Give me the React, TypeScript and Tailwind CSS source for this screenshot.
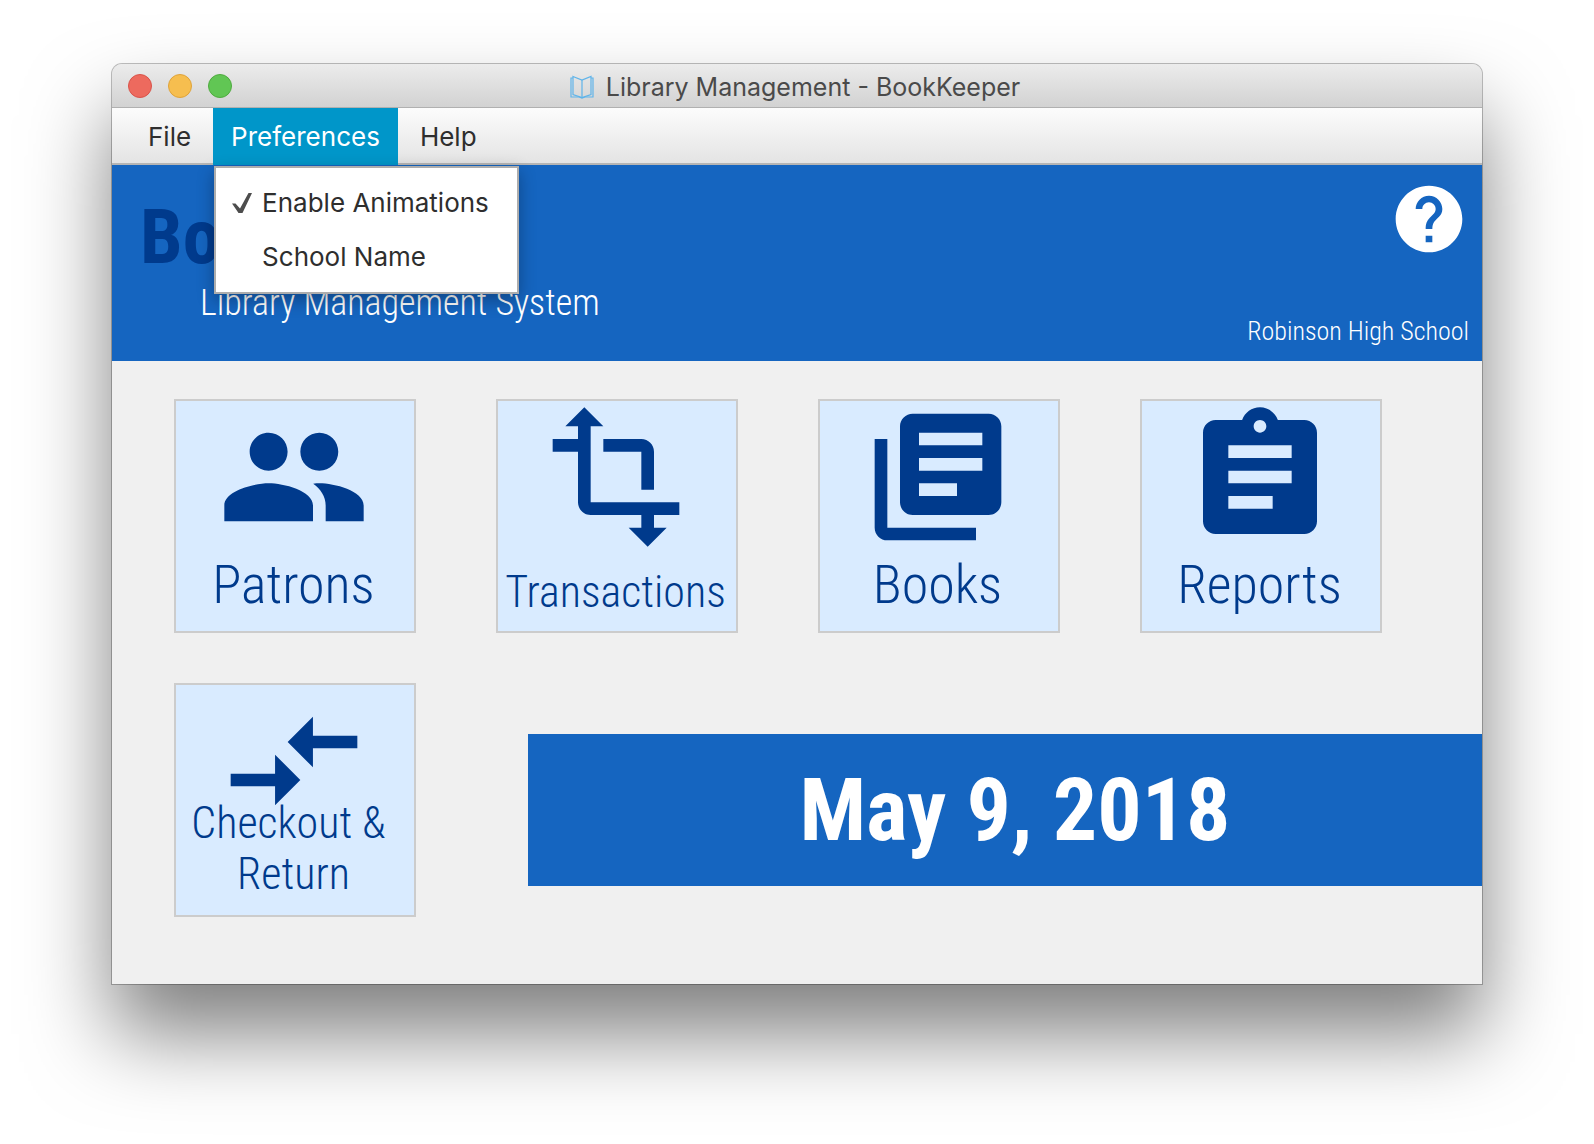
import { MdAssignment, MdCompareArrows, MdHelp, MdLibraryBooks, MdPeople, MdTransform } from "react-icons/md";
import type { ReactNode } from "react";

const roboto = "font-['Roboto_Condensed','Roboto',sans-serif]";

function BookIcon() {
  return (
    <svg viewBox="0 0 24 24" className="size-6" fill="none" stroke="#5fb4ea" strokeWidth="1.2" aria-hidden="true">
      <path d="M3 1.500 12 5l9-3.500v18L12 22.500 3 19.500z" />
      <path d="M12 5v17.500M3 3H1v19h8l3 1 3-1h8V3h-2" />
    </svg>
  );
}

function Tile({ icon, children, size }: { icon: ReactNode; children: ReactNode; size: string }) {
  return (
    <button
      type="button"
      className="flex h-[234px] flex-col items-center border-2 border-[#cccccc] bg-[#d9ebff] pr-[3px] font-light text-[#003a8c]"
    >
      {icon}
      <span className={size}>{children}</span>
    </button>
  );
}

export default function App() {
  return (
    <div className="min-h-screen bg-white px-28 pt-16 pb-40 font-['Inter',sans-serif]">
      <main className="rounded-t-[10px] bg-[#f0f0f0] shadow-[0_0_0_1px_rgba(0,0,0,0.25),0_50px_84px_rgba(0,0,0,0.5)]">
        <div className="flex h-11 items-center rounded-t-[10px] border-b border-[#b0b0b0] bg-linear-to-b from-[#ececec] to-[#d2d2d2] px-4">
          <div className="flex flex-1 gap-4">
            <button type="button" aria-label="Close" className="size-6 rounded-full border border-[#d9534a] bg-[#ed6a5e]" />
            <button type="button" aria-label="Minimize" className="size-6 rounded-full border border-[#dfa33a] bg-[#f6be4f]" />
            <button type="button" aria-label="Zoom" className="size-6 rounded-full border border-[#4fab3f] bg-[#61c654]" />
          </div>
          <h1 className="flex items-center gap-3 pt-0.5 pr-1 text-[25px] leading-8 text-[#4a4a4a]">
            <BookIcon />
            Library Management - BookKeeper
          </h1>
          <div className="flex-1" />
        </div>

        <nav className="flex h-[57px] border-b-2 border-[#b5b5b5] bg-linear-to-b from-[#fcfcfc] to-[#e4e4e4] pl-[18px] text-[26px] leading-8 text-[#2e2e2e]">
          <button type="button" className="pt-0.5 pr-[22px] pl-[18px]">File</button>
          <div className="relative -mb-0.5 flex">
            <button type="button" aria-expanded="true" className="bg-[#0096c9] px-[18px] text-white">Preferences</button>
            <div
              role="menu"
              className="absolute top-[58px] left-px z-10 flex w-[305px] flex-col border-2 border-[#adadad] bg-white py-2 shadow-[0_6px_16px_rgba(0,0,0,0.3)]"
            >
              <button type="button" role="menuitemcheckbox" aria-checked="true" className="flex h-[54px] items-center gap-2.5 pl-4 whitespace-nowrap">
                <svg viewBox="0 0 20 20" className="size-5" fill="#4d4d4d" aria-hidden="true">
                  <path d="M0 10.500h3.500l4.500 5L16.500 0H20L10.500 20h-4z" />
                </svg>
                Enable Animations
              </button>
              <button type="button" role="menuitem" className="flex h-[54px] items-center pl-[46px] whitespace-nowrap">
                School Name
              </button>
            </div>
          </div>
          <button type="button" className="px-[22px] pt-0.5">Help</button>
        </nav>

        <header className={`${roboto} flex h-[196px] justify-between bg-[#1565c0] text-white`}>
          <div className="pt-7 pl-7">
            <h2 className="text-[76px] leading-[88px] font-bold text-[#003a8c]">BookKeeper</h2>
            <p className="pt-0.5 pl-[60px] text-4xl leading-10 font-light">Library Management System</p>
          </div>
          <div className="flex flex-col items-end justify-between pt-3.5 pr-[13px] pb-3">
            <button type="button" aria-label="Help">
              <MdHelp className="size-20" />
            </button>
            <p className="text-[26px] leading-9 font-light">Robinson High School</p>
          </div>
        </header>

        <section className={`${roboto} grid grid-cols-4 gap-x-20 gap-y-[50px] pt-[38px] pr-[100px] pb-[67px] pl-[62px]`}>
          <Tile icon={<MdPeople className="size-[152px]" />} size="text-[54px] leading-[64px]">Patrons</Tile>
          <Tile icon={<MdTransform className="size-[152px]" />} size="text-[44px] leading-[78px]">Transactions</Tile>
          <Tile icon={<MdLibraryBooks className="size-[152px]" />} size="text-[54px] leading-[64px]">Books</Tile>
          <Tile icon={<MdAssignment className="size-[152px]" />} size="text-[54px] leading-[64px]">Reports</Tile>
          <Tile icon={<MdCompareArrows className="size-[152px]" />} size="-mt-[39px] text-[44px] leading-[51px]">
            Checkout &amp;&nbsp;
            <br />
            Return
          </Tile>
          <div className="col-span-3 mt-5 -mr-[100px] ml-8 flex h-[152px] items-center justify-center self-center bg-[#1565c0] pl-5">
            <time dateTime="2018-05-09" className="text-[88px] leading-none font-bold text-white">May 9, 2018</time>
          </div>
        </section>
      </main>
    </div>
  );
}
